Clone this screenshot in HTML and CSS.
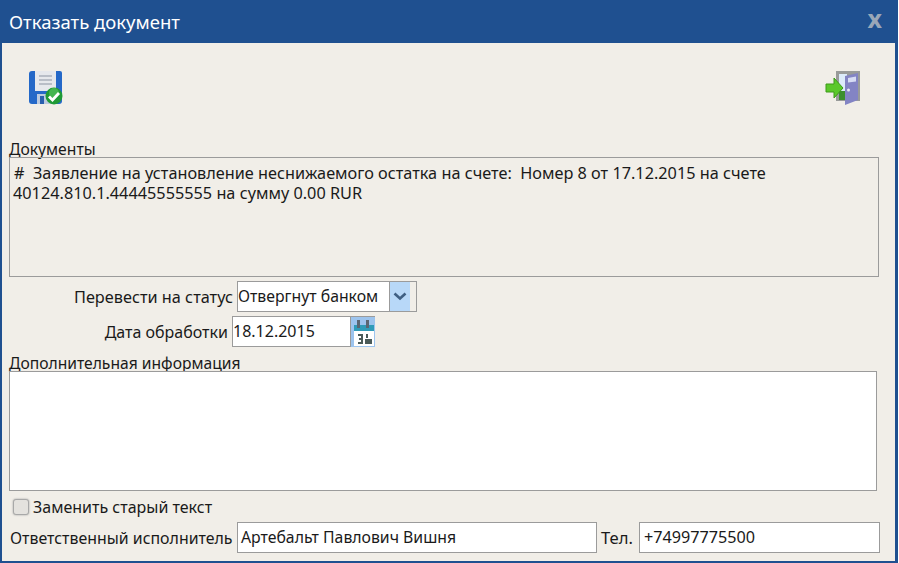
FILE: index.html
```html
<!DOCTYPE html>
<html lang="ru">
<head>
<meta charset="utf-8">
<title>Отказать документ</title>
<link rel="stylesheet" href="styles.css">
</head>
<body>
<div class="dialog">
  <header class="titlebar">
    <h1 class="title">Отказать документ</h1>
    <span class="close">x</span>
  </header>
  <div class="content">
    <div class="toolbar">
      <svg class="icon" width="35" height="35" viewBox="0 0 35 35">
        <path d="M3 1h28a2 2 0 0 1 2 2v28a3 3 0 0 1-3 3H3a3 3 0 0 1-3-3V4a3 3 0 0 1 3-3z" fill="#2468c8"/>
        <rect x="6" y="1" width="21" height="20" fill="#e6e8ec"/>
        <path d="M10 6h13M10 10h13M10 14h13" stroke="#aab0ba" stroke-width="1.600"/>
        <rect x="8" y="24" width="15" height="10" fill="#bccadf"/>
        <rect x="11" y="26" width="4" height="8" fill="#2a5fae"/>
        <circle cx="25" cy="26" r="8.500" fill="#1f9a35"/>
        <circle cx="25" cy="23" r="5" fill="#5cc860" opacity=".6"/>
        <path d="M20 26.500l3.500 3.500 6.500-7" fill="none" stroke="#fff" stroke-width="2.800"/>
      </svg>
      <svg class="icon" width="36" height="35" viewBox="0 0 36 35">
        <rect x="11" y="1" width="24" height="30" fill="#999b9a"/>
        <rect x="14" y="4" width="8" height="25" fill="#dcebfa"/>
        <rect x="14" y="21" width="8" height="9" fill="#3b8f2e"/>
        <path d="M20 6l13-3v27l-13 5z" fill="#8384c4"/>
        <path d="M23 8l8-1.500v5l-8 1z" fill="#d7dcf4"/>
        <circle cx="23.500" cy="20" r="1.500" fill="#e8e8f5"/>
        <path d="M1 14h8v-6l9 10-9 10v-6H1z" fill="#5bc82a" stroke="#3c9a18"/>
      </svg>
    </div>
    <div class="section-label">Документы</div>
    <div class="doc-box">#&nbsp; Заявление на установление неснижаемого остатка на счете:&nbsp; Номер 8 от 17.12.2015 на счете<br>40124.810.1.44445555555 на сумму 0.00 RUR</div>
    <div class="status-row">
      <span class="status-label">Перевести на статус</span>
      <div class="select">
        <span class="select-text">Отвергнут банком</span>
        <span class="select-arrow">
          <svg width="14" height="9" viewBox="0 0 14 9"><path d="M1.500 1.500l5.500 5 5.500-5" fill="none" stroke="#3f5f83" stroke-width="2.600"/></svg>
        </span>
        <span class="select-end"></span>
      </div>
    </div>
    <div class="date-row">
      <span class="date-label">Дата обработки</span>
      <div class="date-input">18.12.2015</div>
      <span class="cal">
        <svg width="24" height="30" viewBox="0 0 24 30">
          <rect width="24" height="30" fill="#9dc4ee"/>
          <rect x="3" y="8" width="20" height="6" fill="#2f9bb8"/>
          <rect x="3" y="14" width="20" height="15" fill="#fff"/>
          <rect x="6" y="3" width="3" height="8" fill="#5a6672"/>
          <rect x="15" y="3" width="3" height="8" fill="#5a6672"/>
          <path d="M7 17h5v10H7v-2h3v-2H8v-2h2v-2H7zM15 17h2v4h-2zM14 22h7v5h-7z" fill="#4a5a58"/>
        </svg>
      </span>
    </div>
    <div class="info-label">Дополнительная информация</div>
    <div class="info-box"></div>
    <label class="check-row"><span class="check"></span>Заменить старый текст</label>
    <div class="person-row">
      <span class="person-label">Ответственный исполнитель</span>
      <div class="text-input person">Артебальт Павлович Вишня</div>
      <span class="tel-label">Тел.</span>
      <div class="text-input tel">+74997775500</div>
    </div>
  </div>
</div>
</body>
</html>
```
FILE: styles.css
```css
* { box-sizing: border-box; }
html, body { margin: 0; height: 100%; background: #fff; }
body { font-family: "Noto Sans", "DejaVu Sans", sans-serif; font-size: 16px; color: #1a1a1a; overflow: hidden; }
.dialog { width: 898px; height: 563px; display: flex; flex-direction: column; background: #f1eee8; border: solid #1f5090; border-width: 0 3px 2px 2px; }
.titlebar { height: 43px; flex: none; background: #1f5090; display: flex; align-items: center; justify-content: space-between; padding: 0 16px 0 9px; margin: 0 -3px 0 -2px; }
.title { margin: 0; font-size: 18.500px; font-weight: 400; color: #fff; }
.close { color: #9aa7b8; font-size: 25px; font-weight: 700; line-height: 1; padding-bottom: 6px; }
.content { flex: 1; display: flex; flex-direction: column; padding: 0 0 0 7px; }
.toolbar { height: 96px; flex: none; display: flex; justify-content: space-between; align-items: flex-start; padding: 27px 34px 0 20px; }
.section-label { height: 18px; line-height: 20px; font-size: 15.700px; }
.doc-box { width: 870px; height: 120px; border: 1px solid #9b9b9b; padding: 5px 3px 0; line-height: 20px; font-size: 16.270px; text-indent: 1px; }
.status-row { display: flex; align-items: center; margin-top: 4px; height: 31px; }
.status-label { width: 228px; text-align: right; padding-right: 4px; font-size: 16.300px; white-space: nowrap; }
.select { width: 180px; height: 31px; border: 1px solid #9b9b9b; background: #fff; display: flex; align-items: stretch; }
.select-text { flex: 1; line-height: 29px; white-space: nowrap; font-size: 15.800px; }
.select-arrow { width: 21px; background: #b8d8f8; border-left: 1px solid #9b9b9b; display: flex; align-items: center; justify-content: center; }
.select-end { width: 6px; background: #f1eee8; }
.date-row { display: flex; align-items: center; margin-top: 4px; height: 31px; }
.date-label { width: 223px; text-align: right; padding-right: 4px; }
.date-input { width: 119px; height: 31px; border: 1px solid #9b9b9b; background: #fff; line-height: 29px; padding-left: 0; }
.cal { width: 24px; height: 31px; border: solid #9b9b9b; border-width: 1px 0 0 0; display: block; line-height: 0; }
.info-label { height: 18px; line-height: 20px; margin-top: 6px; font-size: 15.650px; }
.info-box { width: 868px; height: 120px; border: 1px solid #9b9b9b; background: #fff; }
.check-row { display: flex; align-items: center; height: 31px; padding-left: 4px; gap: 4px; }
.check { width: 16px; height: 16px; border: 1px solid #a8a8a8; border-radius: 3px; background: #e4e2de; box-shadow: 0 0 2px #999; }
.person-row { display: flex; align-items: center; height: 31px; }
.person-label { width: 228px; white-space: nowrap; font-size: 15.900px; padding-left: 1px; }
.text-input { height: 31px; border: 1px solid #9b9b9b; background: #fff; line-height: 29px; padding-left: 3px; }
.person { width: 360px; font-size: 15.800px; }
.tel-label { width: 42px; padding-left: 4px; font-size: 16.600px; }
.tel { width: 241px; font-size: 16.200px; padding-left: 4px; }
```
